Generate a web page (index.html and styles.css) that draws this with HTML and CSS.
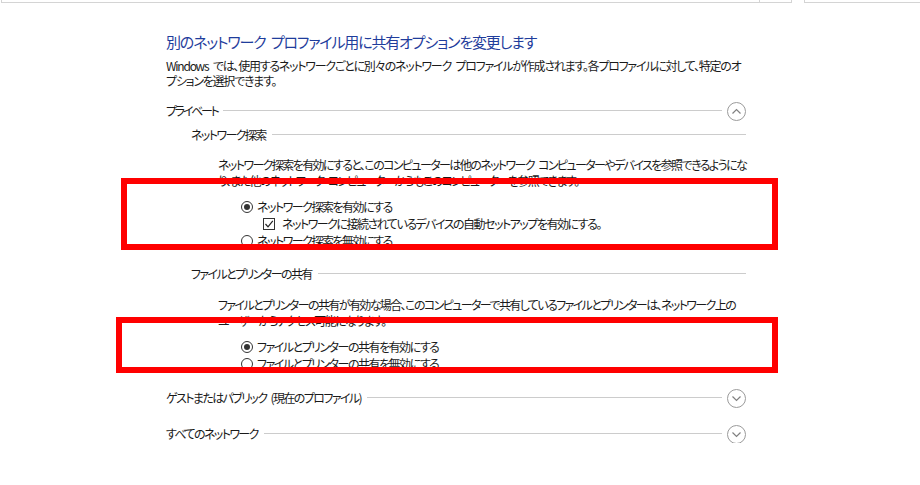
FILE: index.html
```html
<!DOCTYPE html>
<html lang="ja">
<head>
    <meta charset="UTF-8">
    <title>共有の詳細設定</title>
    <link rel="stylesheet" href="styles.css">
</head>
<body>

<div class="topbar">
    <div class="address"><div class="refresh"></div></div>
    <div class="search"></div>
</div>

<div class="content">
    <h1 class="title">別のネットワーク プロファイル用に共有オプションを変更します</h1>
    <p class="intro">Windows では、使用するネットワークごとに別々のネットワーク プロファイルが作成されます。各プロファイルに対して、特定のオ<br>プションを選択できます。</p>

    <div class="profile">
        <div class="profile_head">
            <span class="label label_narrow">プライベート</span>
            <span class="rule"></span>
            <span class="toggle">
                <svg width="19" height="19" viewBox="0 0 19 19"><circle cx="9.5" cy="9.5" r="9" fill="none" stroke="#9a9a9a"/><path d="M5.5 11.5 L9.5 7.5 L13.5 11.5" fill="none" stroke="#808080" stroke-width="1.2"/></svg>
            </span>
        </div>

        <div class="group group_first">
            <div class="group_head">
                <span class="label">ネットワーク探索</span>
                <span class="rule"></span>
            </div>
            <p class="group_text">ネットワーク探索を有効にすると、このコンピューターは他のネットワーク コンピューターやデバイスを参照できるようにな<br>り、また他のネットワーク コンピューターからもこのコンピューターを参照できます。</p>
            <div class="options">
                <div class="option"><span class="radio checked"></span>ネットワーク探索を有効にする</div>
                <div class="option sub"><span class="check">
                    <svg width="12" height="12" viewBox="0 0 12 12"><path d="M2.5 6 L5 8.8 L9.8 2.8" fill="none" stroke="#222" stroke-width="1.2"/></svg>
                </span>ネットワークに接続されているデバイスの自動セットアップを有効にする。</div>
                <div class="option"><span class="radio"></span>ネットワーク探索を無効にする</div>
            </div>
        </div>

        <div class="group group_second">
            <div class="group_head">
                <span class="label">ファイルとプリンターの共有</span>
                <span class="rule"></span>
            </div>
            <p class="group_text">ファイルとプリンターの共有が有効な場合、このコンピューターで共有しているファイルとプリンターは、ネットワーク上の<br>ユーザーからアクセス可能になります。</p>
            <div class="options options_second">
                <div class="option"><span class="radio checked"></span>ファイルとプリンターの共有を有効にする</div>
                <div class="option"><span class="radio"></span>ファイルとプリンターの共有を無効にする</div>
            </div>
        </div>
    </div>

    <div class="profile profile_guest">
        <div class="profile_head">
            <span class="label">ゲストまたはパブリック (現在のプロファイル)</span>
            <span class="rule"></span>
            <span class="toggle">
                <svg width="19" height="19" viewBox="0 0 19 19"><circle cx="9.5" cy="9.5" r="9" fill="none" stroke="#9a9a9a"/><path d="M5.5 7.5 L9.5 11.5 L13.5 7.5" fill="none" stroke="#808080" stroke-width="1.2"/></svg>
            </span>
        </div>
    </div>

    <div class="profile profile_all">
        <div class="profile_head">
            <span class="label">すべてのネットワーク</span>
            <span class="rule"></span>
            <span class="toggle">
                <svg width="19" height="19" viewBox="0 0 19 19"><circle cx="9.5" cy="9.5" r="9" fill="none" stroke="#9a9a9a"/><path d="M5.5 7.5 L9.5 11.5 L13.5 7.5" fill="none" stroke="#808080" stroke-width="1.2"/></svg>
            </span>
        </div>
    </div>
</div>

<div class="mark mark_discovery"></div>
<div class="mark mark_sharing"></div>

</body>
</html>
```

FILE: styles.css
```css
body {
    margin: 0;
    background: white;
    color: #1a1a1a;
    font-family: "Noto Sans CJK JP", "Noto Sans", sans-serif;
    font-feature-settings: "palt";
    font-size: 12px;
}

.topbar {
    display: flex;
    height: 3px;
}

.address {
    width: 791px;
    margin-left: 1px;
    border: 1px solid #d4d4d4;
    border-top: none;
    box-sizing: border-box;
}

.refresh {
    margin-left: 757px;
    width: 1px;
    height: 2px;
    background: #d4d4d4;
}

.search {
    margin-left: 12px;
    flex: 1;
    border: 1px solid #d4d4d4;
    border-top: none;
    border-right: none;
}

.content {
    margin-left: 166px;
    width: 580px;
    word-spacing: 3px;
}

.title {
    margin: 29px 0 0 0;
    font-size: 15px;
    font-weight: normal;
    line-height: 20px;
    color: #1f3d9c;
    letter-spacing: -1.15px;
    white-space: nowrap;
}

.intro {
    margin: 6px 0 0 0;
    line-height: 15px;
    letter-spacing: -1.24px;
    white-space: nowrap;
}

.profile_head, .group_head {
    display: flex;
    align-items: center;
    height: 20px;
}

.profile {
    margin-top: 12px;
}

.label {
    letter-spacing: -1.6px;
    padding-right: 6px;
    white-space: nowrap;
}

.label_narrow {
    letter-spacing: -2.3px;
}

.rule {
    flex: 1;
    height: 1px;
    background: #cccccc;
}

.toggle {
    margin-left: 5px;
    width: 19px;
    height: 19px;
    margin-top: 3px;
}

.toggle svg {
    display: block;
}

.group {
    margin-left: 25px;
}

.group_first {
    margin-top: 4px;
}

.group_second {
    margin-top: 14px;
}

.group_text {
    margin: 13px 0 0 27px;
    line-height: 16px;
    letter-spacing: -1.6px;
    white-space: nowrap;
}

.group_second .group_text {
    margin-top: 14px;
}

.options {
    margin: 9px 0 0 50px;
}

.options_second {
    margin-top: 9px;
}

.option {
    display: flex;
    align-items: center;
    height: 17px;
    letter-spacing: -1.5px;
    white-space: nowrap;
}

.option.sub {
    margin-left: 22px;
}

.radio {
    width: 12px;
    height: 12px;
    border: 1px solid #333;
    border-radius: 50%;
    box-sizing: border-box;
    margin-right: 4px;
    display: flex;
    align-items: center;
    justify-content: center;
}

.radio.checked::after {
    content: "";
    width: 6px;
    height: 6px;
    border-radius: 50%;
    background: #333;
}

.check {
    width: 12px;
    height: 12px;
    border: 1px solid #333;
    box-sizing: border-box;
    margin-right: 7px;
    display: flex;
    align-items: center;
    justify-content: center;
}

.check svg {
    display: block;
    flex: none;
}

.profile_guest {
    margin-top: 15px;
}

.profile_all {
    margin-top: 16px;
}

.mark {
    position: absolute;
    border: 6px solid #ff0000;
    box-sizing: border-box;
}

.mark_discovery {
    left: 121px;
    top: 178px;
    width: 657px;
    height: 72px;
}

.mark_sharing {
    left: 116px;
    top: 317px;
    width: 662px;
    height: 56px;
}
```
